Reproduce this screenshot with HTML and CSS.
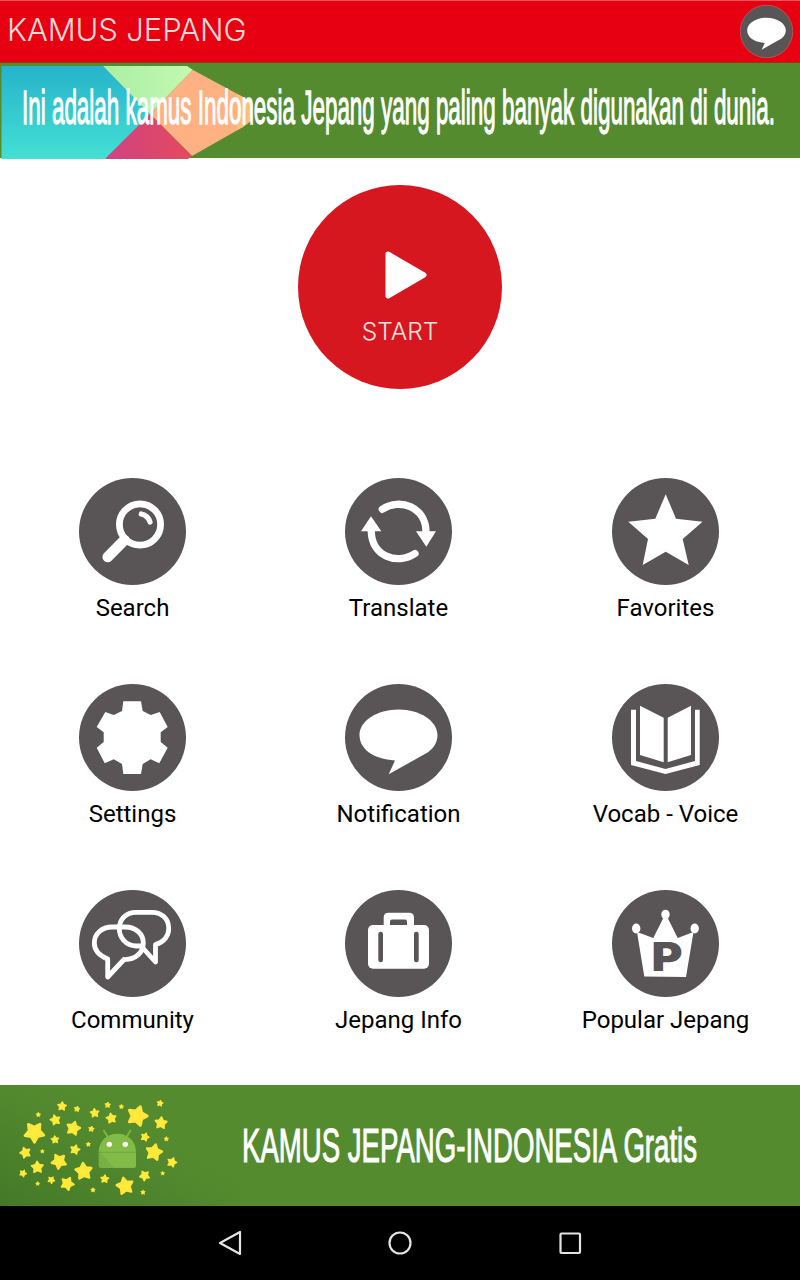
FILE: index.html
```
<!DOCTYPE html>
<html lang="id">
<head>
    <meta charset="UTF-8">
    <meta name="viewport" content="width=device-width, initial-scale=1.0">
    <title>Kamus Jepang</title>
    <link rel="stylesheet" href="styles.css">
</head>
<body>
    <div class="app">
        <header class="header">
            <h1 class="title">KAMUS JEPANG</h1>
            <svg class="header-icon" viewBox="0 0 107 107">
                <circle class="disc" cx="53.5" cy="53.5" r="53"/>
                <path class="fill" d="M50 76.5 C28 75 14.5 65 14.5 51 C14.5 37 32 25.5 53.5 25.5 S92.5 37 92.5 51 C92.5 58 89 64 83 68.3 L43.7 90.3 Z"/>
            </svg>
        </header>

        <svg class="banner-top" viewBox="0 0 800 96">
            <defs>
                <linearGradient id="teal" x1="0" y1="0" x2="0" y2="1">
                    <stop offset="0" stop-color="#27b3cb"/>
                    <stop offset="1" stop-color="#43e0d4"/>
                </linearGradient>
                <linearGradient id="lime" x1="0" y1="0" x2="1" y2="0">
                    <stop offset="0" stop-color="#a9efa5"/>
                    <stop offset="1" stop-color="#c4f8b0"/>
                </linearGradient>
                <linearGradient id="pink" x1="0" y1="0" x2="1" y2="0">
                    <stop offset="0" stop-color="#cf4284"/>
                    <stop offset="1" stop-color="#e54a5c"/>
                </linearGradient>
            </defs>
            <rect width="800" height="95" fill="#558b2f"/>
            <path d="M1.5 3 H103 L151 51 L105 96 H1.5 Z" fill="url(#teal)"/>
            <path d="M103 3 H187 L193 7 L150 51 Z" fill="url(#lime)"/>
            <path d="M193 7 L243 34 L252 41 V57 L243 64 L192 93 L150 51 Z" fill="#ffb184"/>
            <path d="M237 31 L243 34 L252 41 V57 L243 64 L237 67 Z" fill="#fdbf7c"/>
            <path d="M150 51 L192 93 L188 96 H105 Z" fill="url(#pink)"/>
            <text class="banner-text slogan" transform="translate(22 61) scale(1 2.12)" textLength="753" lengthAdjust="spacingAndGlyphs">Ini adalah kamus Indonesia Jepang yang paling banyak digunakan di dunia.</text>
        </svg>

        <main class="main">
            <div class="start">
                <svg class="play" viewBox="0 0 42 48">
                    <path d="M3 3 L39 24 L3 45 Z"/>
                </svg>
                <span class="start-text">START</span>
            </div>

            <div class="menu">
                <div class="item">
                    <svg class="icon" viewBox="0 0 107 107">
                        <circle class="disc" cx="53.5" cy="53.5" r="53.5"/>
                        <circle class="line" cx="61" cy="46.5" r="20.6" stroke-width="6.8"/>
                        <path class="line" d="M45.5 62 L28.7 79" stroke-width="10.5"/>
                        <path class="line" d="M62.3 36 Q69 37.5 71 44" stroke-width="5.2"/>
                    </svg>
                    <span class="label">Search</span>
                </div>
                <div class="item">
                    <svg class="icon" viewBox="0 0 107 107">
                        <circle class="disc" cx="53.5" cy="53.5" r="53.5"/>
                        <path class="line" d="M37.3 31.3 C55 19.5 81 29 81 54" stroke-width="7.3"/>
                        <path class="line" d="M70 75.5 C52 87.5 26.3 78 26.3 53" stroke-width="7.3"/>
                        <path class="fill" d="M71 53.3 H91 L81.3 68.7 Z M16 53.3 H36.3 L26 38.3 Z"/>
                    </svg>
                    <span class="label">Translate</span>
                </div>
                <div class="item">
                    <svg class="icon" viewBox="0 0 107 107">
                        <circle class="disc" cx="53.5" cy="53.5" r="53.5"/>
                        <polygon class="fill" points="53.7,16.3 64,40.7 90.5,43.7 70.7,61 76.7,87 53.7,73.7 30.7,87 36,61 16.3,43.7 43.3,40.7"/>
                    </svg>
                    <span class="label">Favorites</span>
                </div>
                <div class="item">
                    <svg class="icon" viewBox="0 0 107 107">
                        <circle class="disc" cx="53.5" cy="53.5" r="53.5"/>
                        <polygon class="fill" points="44.3,17.3 62,17.3 63.7,27 71.7,31 80.7,28 88.7,43 81.7,48.3 81.7,58 88.7,63.7 80.3,79.3 71.7,75.3 63.7,80 62,90 44.3,90 43,80 34.7,75.3 25.7,79.3 17.7,63.7 24.7,58 24.7,48.3 17.7,43 26.3,28 34.7,31 43,27"/>
                    </svg>
                    <span class="label">Settings</span>
                </div>
                <div class="item">
                    <svg class="icon" viewBox="0 0 107 107">
                        <circle class="disc" cx="53.5" cy="53.5" r="53.5"/>
                        <path class="fill" d="M50 76.5 C28 75 14.5 65 14.5 51 C14.5 37 32 25.5 53.5 25.5 S92.5 37 92.5 51 C92.5 58 89 64 83 68.3 L43.7 90.3 Z"/>
                    </svg>
                    <span class="label">Notification</span>
                </div>
                <div class="item">
                    <svg class="icon" viewBox="0 0 107 107">
                        <circle class="disc" cx="53.5" cy="53.5" r="53.5"/>
                        <path class="fill" d="M19 25.7 H24 V77 L53.5 85 L83 77 V25.7 H87.7 V81 L53.5 90 L19 81 Z"/>
                        <path class="fill" d="M28 21.7 L51.7 33.7 V78.3 L28 71 Z M79 21.7 L55.7 33.7 V78.3 L79 71 Z"/>
                    </svg>
                    <span class="label">Vocab - Voice</span>
                </div>
                <div class="item">
                    <svg class="icon" viewBox="0 0 107 107">
                        <circle class="disc" cx="53.5" cy="53.5" r="53.5"/>
                        <path class="line" d="M28.7 69 C20 65.5 15.3 60 15.3 53 C15.3 43.5 23 37 33 37 H46 C57 37 64.3 44 64.3 53 C64.3 63 56 70 45 69.5 L28.7 87 Z" stroke-width="4.8"/>
                        <path class="line" d="M76.5 72 V54.5 C85 52 89.7 46 89.7 38.5 C89.7 29 83 22.3 73 22.3 H57 C47 22.3 40.3 29.5 40.3 38.5 C40.3 48 47 55.5 57 56 H62 Z" stroke-width="4.8"/>
                    </svg>
                    <span class="label">Community</span>
                </div>
                <div class="item">
                    <svg class="icon" viewBox="0 0 107 107">
                        <circle class="disc" cx="53.5" cy="53.5" r="53.5"/>
                        <rect class="fill" x="23" y="35" width="61" height="43.7" rx="5"/>
                        <path class="fill" d="M38.7 36 V27.5 Q38.7 22.7 43.5 22.7 H64 Q69 22.7 69 27.5 V36 Z"/>
                        <path class="disc" d="M45 35 V31.5 Q45 29.5 47 29.5 H60 Q62 29.5 62 31.5 V35 Z"/>
                        <rect class="disc" x="33.3" y="41.7" width="4.7" height="30.6" rx="2.3"/>
                        <rect class="disc" x="69" y="41.7" width="4.7" height="30.6" rx="2.3"/>
                    </svg>
                    <span class="label">Jepang Info</span>
                </div>
                <div class="item">
                    <svg class="icon" viewBox="0 0 107 107">
                        <circle class="disc" cx="53.5" cy="53.5" r="53.5"/>
                        <ellipse class="fill" cx="53.5" cy="24.5" rx="4.2" ry="4.8"/>
                        <ellipse class="fill" cx="24.2" cy="38.5" rx="4.2" ry="5"/>
                        <ellipse class="fill" cx="82.7" cy="38.5" rx="4.2" ry="5"/>
                        <path class="fill" d="M25 42 L41.3 48 L51.3 28 H55.7 L65.7 48 L81.5 42 L74 87 L32.3 86.5 Z"/>
                        <text class="crown-text" x="39.5" y="81" textLength="31" lengthAdjust="spacingAndGlyphs">P</text>
                    </svg>
                    <span class="label">Popular Jepang</span>
                </div>
            </div>
        </main>

        <div class="banner-bottom">
            <svg class="stars" viewBox="0 0 720 363">
                <defs>
                    <linearGradient id="shade" x1="0" y1="1" x2="1" y2="0">
                        <stop offset="0" stop-color="#447a27"/>
                        <stop offset="0.6" stop-color="#558b2f"/>
                    </linearGradient>
                    <path id="star" d="M0 -9 L2.9 -4 L8.6 -2.8 L4.7 1.5 L5.3 7.3 L0 4.9 L-5.3 7.3 L-4.7 1.5 L-8.6 -2.8 L-2.9 -4 Z"/>
                </defs>
                <rect width="720" height="363" fill="url(#shade)"/>
                <g class="star-set">
                    <use href="#star" transform="translate(186 64) rotate(5) scale(1.5)"/>
                    <use href="#star" transform="translate(231 72) rotate(10) scale(1)"/>
                    <use href="#star" transform="translate(115 89) scale(.8)"/>
                    <use href="#star" transform="translate(166 105) rotate(-15) scale(1.7)"/>
                    <use href="#star" transform="translate(103 142) rotate(35) scale(3.3)"/>
                    <use href="#star" transform="translate(220 130) rotate(15) scale(2.3)"/>
                    <use href="#star" transform="translate(284 84) rotate(-5) scale(1.5)"/>
                    <use href="#star" transform="translate(323 60) rotate(5) scale(1)"/>
                    <use href="#star" transform="translate(364 65) scale(.8)"/>
                    <use href="#star" transform="translate(334 100) rotate(-10) scale(1.7)"/>
                    <use href="#star" transform="translate(412 93) rotate(18) scale(3.3)"/>
                    <use href="#star" transform="translate(480 55) rotate(10) scale(1.1)"/>
                    <use href="#star" transform="translate(483 114) rotate(5) scale(2)"/>
                    <use href="#star" transform="translate(274 132) rotate(10) scale(1)"/>
                    <use href="#star" transform="translate(165 164) rotate(-5) scale(1.3)"/>
                    <use href="#star" transform="translate(265 178) scale(.8)"/>
                    <use href="#star" transform="translate(435 156) rotate(20) scale(1.4)"/>
                    <use href="#star" transform="translate(499 162) scale(.8)"/>
                    <use href="#star" transform="translate(76 203) rotate(-20) scale(1.8)"/>
                    <use href="#star" transform="translate(127 199) scale(.7)"/>
                    <use href="#star" transform="translate(225 194) rotate(15) scale(1.6)"/>
                    <use href="#star" transform="translate(177 229) rotate(-30) scale(2.5)"/>
                    <use href="#star" transform="translate(462 202) rotate(12) scale(2.7)"/>
                    <use href="#star" transform="translate(516 232) rotate(20) scale(1.6)"/>
                    <use href="#star" transform="translate(112 247) rotate(-3) scale(2)"/>
                    <use href="#star" transform="translate(69 265) rotate(25) scale(1.2)"/>
                    <use href="#star" transform="translate(251 259) rotate(-5) scale(2.8)"/>
                    <use href="#star" transform="translate(154 285) rotate(30) scale(1.2)"/>
                    <use href="#star" transform="translate(113 296) scale(.7)"/>
                    <use href="#star" transform="translate(202 296) rotate(25) scale(2.2)"/>
                    <use href="#star" transform="translate(314 282) rotate(5) scale(1.4)"/>
                    <use href="#star" transform="translate(279 315) scale(.8)"/>
                    <use href="#star" transform="translate(375 303) rotate(-12) scale(2.8)"/>
                    <use href="#star" transform="translate(434 272) rotate(-30) scale(1.7)"/>
                    <use href="#star" transform="translate(488 265) scale(.7)"/>
                    <use href="#star" transform="translate(429 322) scale(.8)"/>
                </g>
                <!-- robot head -->
                <path d="M312 137 L322 154 M391 137 L381 154" stroke="#7cb342" stroke-width="6" stroke-linecap="round"/>
                <path d="M296 202 C296 168 320 146 352 146 S408 168 408 202 Z" fill="#82bb46"/>
                <path d="M296 202 H408 V242 Q408 249 401 249 H303 Q296 249 296 242 Z" fill="#78b045"/>
                <path d="M302 204 L342 248 H401 Q408 248 408 242 V202 H302 Z" fill="#8bc34a" opacity=".6"/>
                <path d="M296 202 H408" stroke="#6fa53e" stroke-width="2"/>
                <circle cx="328" cy="178" r="8" fill="#fff"/>
                <circle cx="376" cy="178" r="8" fill="#fff"/>
            </svg>
            <svg class="promo" viewBox="0 0 560 121">
                <text class="banner-text promo-text" transform="translate(2 77) scale(1 1.76)" textLength="455" lengthAdjust="spacingAndGlyphs">KAMUS JEPANG-INDONESIA Gratis</text>
            </svg>
        </div>

        <nav class="navbar">
            <svg class="nav-icon" viewBox="0 0 26 26"><path d="M23 2 V24 L3 13 Z"/></svg>
            <svg class="nav-icon" viewBox="0 0 26 26"><circle cx="13" cy="13" r="10.5"/></svg>
            <svg class="nav-icon" viewBox="0 0 26 26"><rect x="3.5" y="3.5" width="19.5" height="19.5" rx="1"/></svg>
        </nav>
    </div>
</body>
</html>
```

FILE: styles.css
```
body {
    margin: 0;
    background-color: #fff;
    font-family: Roboto, sans-serif;
}

.app {
    display: flex;
    flex-direction: column;
    width: 800px;
    height: 1280px;
    overflow: hidden;
}

.header {
    display: flex;
    justify-content: space-between;
    align-items: center;
    box-sizing: border-box;
    height: 63px;
    padding: 0 7px 0 7px;
    background-color: #e60012;
    border-top: 1px solid #f0555c;
    border-bottom: 1px solid #8c3a14;
}

.title {
    margin: 0;
    padding-bottom: 3px;
    font-family: Inter, "Liberation Sans", sans-serif;
    font-size: 31px;
    font-weight: 300;
    line-height: 58px;
    letter-spacing: -0.1px;
    color: #ffdcd8;
}

.header-icon {
    width: 53px;
    height: 53px;
}

.header-icon .disc {
    stroke: #c98078;
    stroke-width: 1;
}

.disc {
    fill: #595556;
}

.fill {
    fill: #fff;
}

.line {
    fill: none;
    stroke: #fff;
    stroke-linecap: round;
    stroke-linejoin: round;
}

.banner-top {
    display: block;
    width: 800px;
    height: 96px;
}

.banner-text {
    font-family: "Liberation Sans", Arial, sans-serif;
    fill: #fff;
    stroke: #fff;
    stroke-width: 0.6px;
}

.slogan {
    font-size: 22.4px;
}

.promo-text {
    font-size: 27.4px;
}

.main {
    display: flex;
    flex-direction: column;
    align-items: center;
    height: 926px;
}

.start {
    display: flex;
    flex-direction: column;
    flex-shrink: 0;
    align-items: center;
    width: 204px;
    height: 204px;
    margin-top: 26px;
    border-radius: 50%;
    background-color: #d71720;
}

.play {
    width: 42px;
    height: 48px;
    margin-top: 66px;
    margin-left: 11px;
}

.play path {
    fill: #fff;
    stroke: #fff;
    stroke-width: 5;
    stroke-linejoin: round;
}

.start-text {
    margin-top: 17px;
    font-family: Inter, "Liberation Sans", sans-serif;
    font-size: 24.5px;
    font-weight: 300;
    line-height: 30px;
    color: #ffe4e2;
}

.menu {
    display: grid;
    grid-template-columns: 265px 267px 267px;
    grid-auto-rows: 145px;
    row-gap: 61px;
    width: 800px;
    margin-top: 89px;
}

.item {
    display: flex;
    flex-direction: column;
    align-items: center;
}

.icon {
    width: 107px;
    height: 107px;
}

.label {
    margin-top: 8px;
    font-size: 24px;
    line-height: 30px;
    color: #000;
}

.crown-text {
    font-family: Inter, sans-serif;
    font-size: 40px;
    font-weight: 900;
    fill: #595556;
}

.banner-bottom {
    display: flex;
    height: 121px;
    background-color: #558b2f;
}

.stars {
    width: 240px;
    height: 121px;
}

.star-set {
    fill: #ffeb3b;
    stroke: #ffe63a;
    stroke-width: 2.5;
    stroke-linejoin: round;
}

.promo {
    width: 560px;
    height: 121px;
}

.navbar {
    display: flex;
    justify-content: center;
    align-items: center;
    gap: 144px;
    height: 74px;
    background-color: #000;
}

.nav-icon {
    width: 26px;
    height: 26px;
    fill: none;
    stroke: #e4e4e4;
    stroke-width: 2.2;
    stroke-linejoin: round;
}
```
